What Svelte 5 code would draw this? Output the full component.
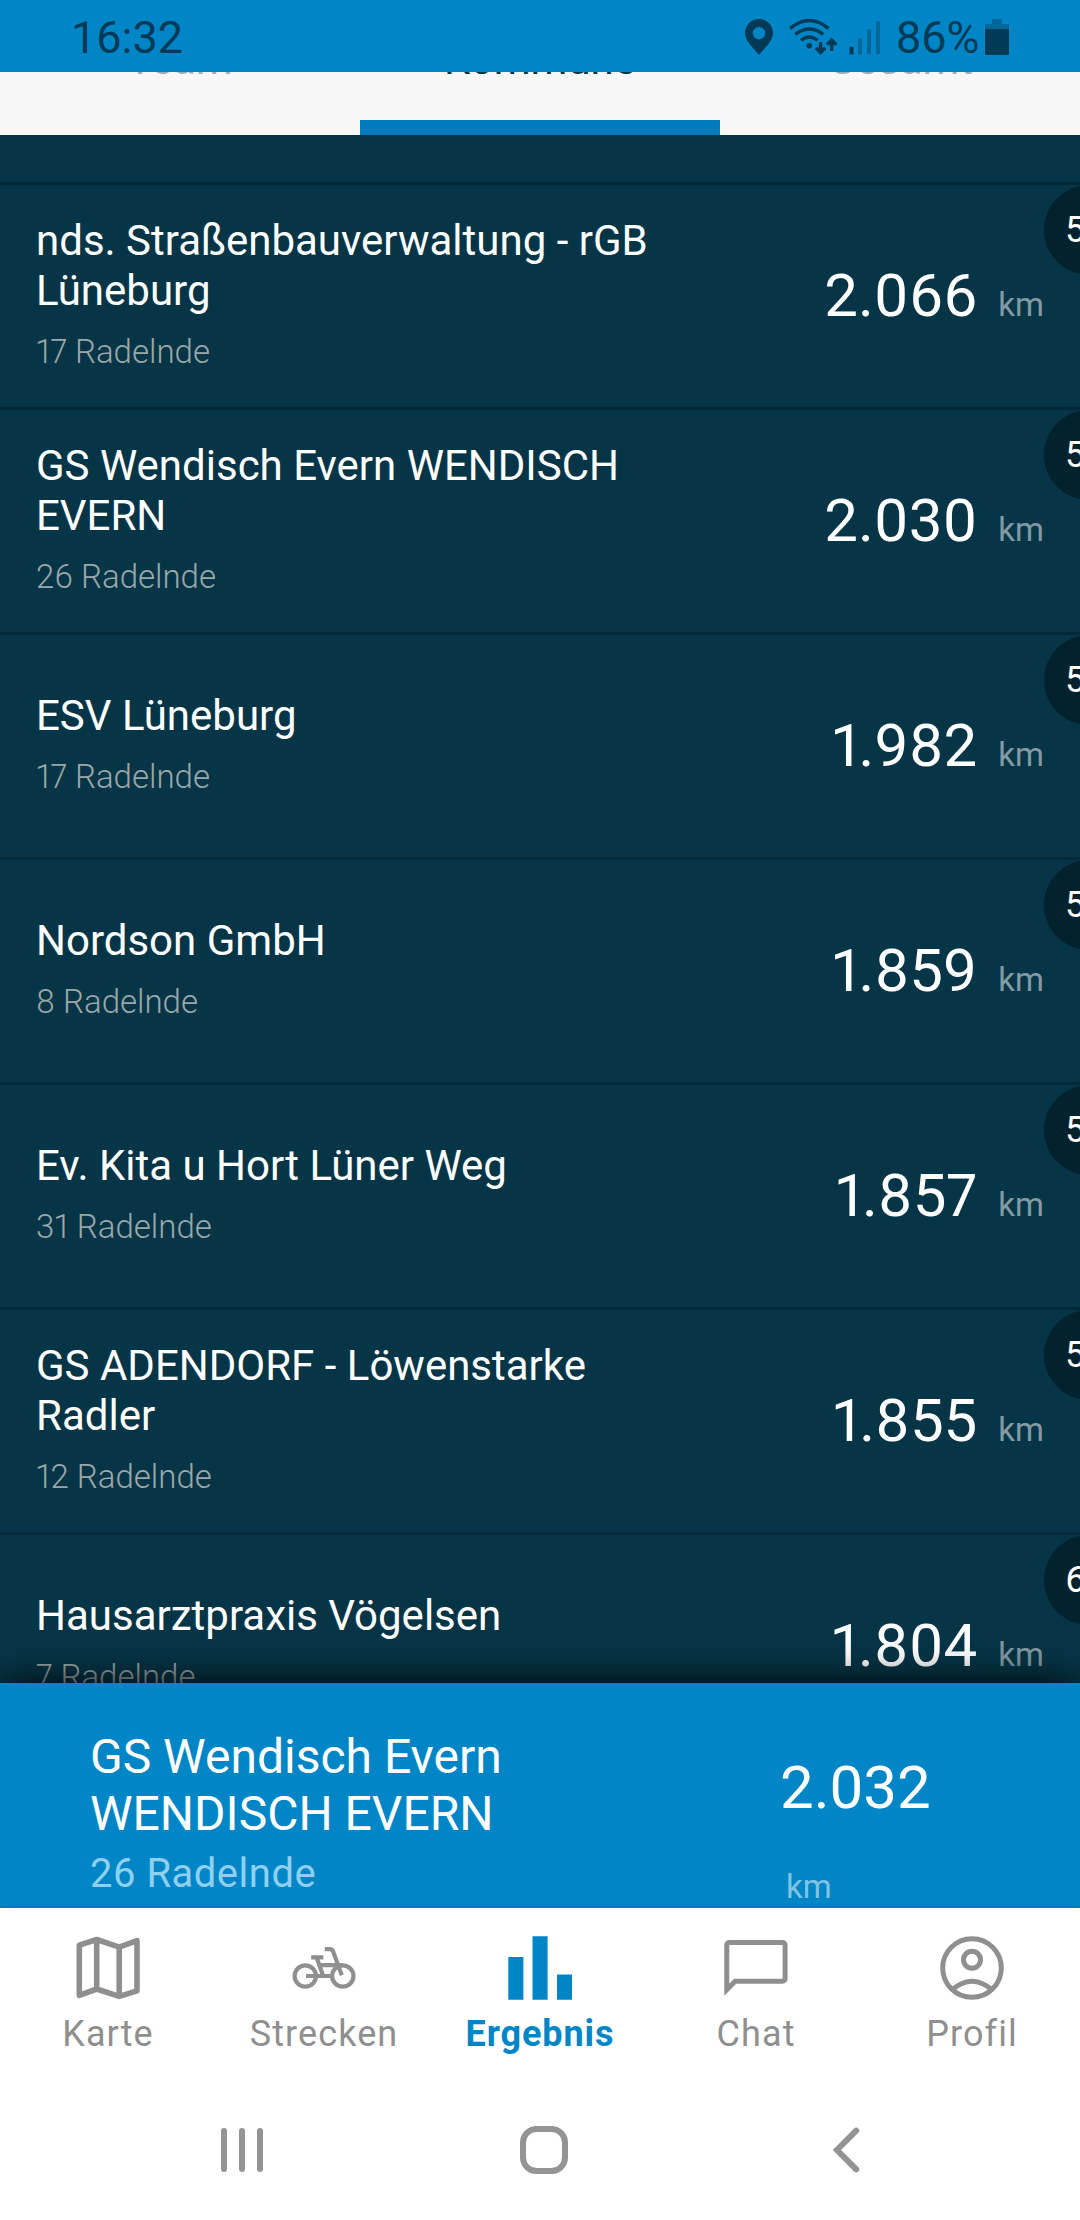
<script lang="ts">
  type Team = { rank: number; name: string; riders: number; km: string }

  const tabs = [`Team`, `Kommune`, `Gesamt`]
  let active_tab = $state(`Kommune`)

  const teams: Team[] = [
    { rank: 54, name: `nds. Straßenbauverwaltung - rGB Lüneburg`, riders: 17, km: `2.066` },
    { rank: 55, name: `GS Wendisch Evern WENDISCH EVERN`, riders: 26, km: `2.030` },
    { rank: 56, name: `ESV Lüneburg`, riders: 17, km: `1.982` },
    { rank: 57, name: `Nordson GmbH`, riders: 8, km: `1.859` },
    { rank: 58, name: `Ev. Kita u Hort Lüner Weg`, riders: 31, km: `1.857` },
    { rank: 59, name: `GS ADENDORF - Löwenstarke Radler`, riders: 12, km: `1.855` },
    { rank: 60, name: `Hausarztpraxis Vögelsen`, riders: 7, km: `1.804` },
  ]
  const own_team = { name: `GS Wendisch Evern WENDISCH EVERN`, riders: 26, km: `2.032` }

  const pages = [`Karte`, `Strecken`, `Ergebnis`, `Chat`, `Profil`]
  let active_page = $state(`Ergebnis`)
</script>

<div class="screen">
  <header class="status">
    <span class="time">16:32</span>
    <div class="indicators">
      <svg class="pin" viewBox="0 0 28 36">
        <path
          fill-rule="evenodd"
          d="M14 0C6.3 0 0 6.2 0 14c0 8 8 14.500 14 22 6-7.500 14-14 14-22C28 6.200 21.700 0 14 0zm0 8a6.200 6.200 0 1 1 0 12.400A6.200 6.200 0 0 1 14 8z"
        />
      </svg>
      <svg class="wifi" viewBox="0 0 48 36">
        <g fill="none" stroke="currentColor" stroke-width="3.400">
          <path d="M1.200 9.400Q20.300-6.200 39.400 9.400M6.300 15.400Q20.300 4.400 34.300 15.400M12 21.300Q20.300 14.600 28.600 21.300" />
          <path d="M31.600 23v10M26.900 28.800l4.700 4.700 4.700-4.700M42.700 32V22M38 25.700l4.700-4.700 4.700 4.700" />
        </g>
        <circle cx="20.300" cy="26.700" r="2.800" />
      </svg>
      <svg class="signal" viewBox="0 0 32 36">
        <rect x="0.500" y="27.500" width="4" height="8" rx="1.500" />
        <g opacity="0.400">
          <rect x="9" y="19" width="4" height="16.500" rx="1.500" />
          <rect x="18" y="10" width="4" height="25.500" rx="1.500" />
          <rect x="27" y="2" width="4" height="33.500" rx="1.500" />
        </g>
      </svg>
      <span class="percent">86%</span>
      <svg class="battery" viewBox="0 0 24 36">
        <path opacity="0.400" d="M7 0h10v5h7v5H0V5h7z" />
        <path d="M0 10h24v24.500a1.500 1.500 0 0 1-1.500 1.500h-21A1.500 1.500 0 0 1 0 34.500z" />
      </svg>
    </div>
  </header>

  <nav class="tabs">
    {#each tabs as tab (tab)}
      <button class:active={tab === active_tab} onclick={() => (active_tab = tab)}>
        <span>{tab}</span>
      </button>
    {/each}
  </nav>

  <main>
    <div class="spacer"></div>
    {#each teams as team (team.rank)}
      <section class="row">
        <div class="info">
          <h2>{team.name}</h2>
          <p>{team.riders} Radelnde</p>
        </div>
        <div class="distance">
          <span class="value">{team.km}</span>
          <span class="unit">km</span>
        </div>
        <span class="rank">{team.rank}.</span>
      </section>
    {/each}
  </main>

  <section class="own">
    <div class="own-info">
      <h2>{own_team.name}</h2>
      <p>{own_team.riders} Radelnde</p>
    </div>
    <div class="own-distance">
      <span class="value">{own_team.km}</span>
      <span class="unit">km</span>
    </div>
  </section>

  <nav class="pages">
    {#each pages as page (page)}
      <button class:active={page === active_page} onclick={() => (active_page = page)}>
        <svg viewBox="0 0 64 64" fill="none" stroke="currentColor" stroke-width="5">
          {#if page === `Karte`}
            <path
              stroke-width="5.600"
              stroke-linejoin="round"
              d="M3.300 9.200 20.700 3.500 43.200 11.200 61 4.600V54.800L43.200 60.400 20.700 53 3.300 59.300ZM20.700 3.500V53M43.200 11.200V60.400"
            />
          {:else if page === `Strecken`}
            <g stroke-width="4.200">
              <circle cx="13.300" cy="40" r="10.700" />
              <circle cx="50.800" cy="40" r="10.700" />
              <path d="M14 40H39M19.200 21.400H31.400M24.800 22 31.200 40M27 29.200H51M32.800 13.200H38.200Q40.300 13.200 41.100 15.400L49.800 39.200" />
            </g>
          {:else if page === `Ergebnis`}
            <path
              fill="currentColor"
              stroke="none"
              d="M.300 21H15.400V63.700H.300ZM24.500 .300H39.600V63.700H24.500ZM49 38.600H64V63.700H49Z"
            />
          {:else if page === `Chat`}
            <path d="M2.800 53.600V9A2.500 2.500 0 0 1 5.300 6.500H58.600A2.500 2.500 0 0 1 61.100 9V42.700A2.500 2.500 0 0 1 58.600 45.200H11.200Z" />
          {:else}
            <circle cx="32" cy="32" r="29.300" />
            <circle cx="32" cy="23.700" r="8.500" />
            <path d="M12.500 53.500Q32 37 51.500 53.500" />
          {/if}
        </svg>
        <span>{page}</span>
      </button>
    {/each}
  </nav>

  <footer class="system">
    <svg viewBox="0 0 48 48">
      <path d="M6 5V43M24 5V43M42 5V43" />
    </svg>
    <svg viewBox="0 0 48 48">
      <rect x="3" y="3" width="42" height="42" rx="13.500" />
    </svg>
    <svg viewBox="0 0 48 48">
      <path d="M34.200 4.600 15 24 34.200 43.400" />
    </svg>
  </footer>
</div>

<style>
  :global(body) {
    margin: 0;
  }
  .screen {
    display: flex;
    flex-direction: column;
    width: 1080px;
    height: 2220px;
    overflow: hidden;
    background: #fff;
    font-family: Roboto, 'Liberation Sans', sans-serif;
  }
  h2,
  p {
    margin: 0;
    font-weight: 400;
  }
  button {
    padding: 0;
    border: 0;
    background: none;
    font: inherit;
  }

  .status {
    display: flex;
    flex: none;
    align-items: center;
    justify-content: space-between;
    box-sizing: border-box;
    height: 72px;
    padding: 2px 71px 0 71px;
    background: #0086c6;
    color: #003a56;
    font-size: 45px;
  }
  .indicators {
    display: flex;
    align-items: center;
  }
  .indicators svg {
    height: 36px;
    fill: currentColor;
  }
  .pin {
    width: 28px;
    margin-right: 16px;
  }
  .wifi {
    width: 48px;
    margin-right: 12px;
  }
  .signal {
    width: 32px;
    margin-right: 15px;
  }
  .percent {
    width: 83px;
    margin-right: 6px;
  }
  .battery {
    width: 24px;
  }

  .tabs {
    display: flex;
    flex: none;
    height: 63px;
    overflow: hidden;
    background: #f7f7f7;
  }
  .tabs button {
    display: flex;
    flex: 1;
    justify-content: center;
    box-sizing: border-box;
    border-bottom: 15px solid transparent;
    color: #9badb8;
    font-size: 42px;
  }
  .tabs button.active {
    border-color: #007bbe;
    color: #073647;
  }
  /* labels are scrolled under the status bar */
  .tabs span {
    margin-top: -36px;
    line-height: 48px;
  }

  main {
    flex: none;
    height: 1548px;
    overflow: hidden;
    background: #063547;
  }
  .spacer {
    height: 47px;
    border-bottom: 3px solid #032936;
  }
  .row {
    position: relative;
    display: flex;
    align-items: center;
    justify-content: space-between;
    box-sizing: border-box;
    height: 225px;
    padding: 0 36px;
    border-bottom: 3px solid #032936;
    color: #fff;
    font-variant-numeric: proportional-nums;
  }
  .info {
    width: 640px;
    padding-bottom: 5px;
  }
  .info h2 {
    font-size: 42px;
    line-height: 50px;
  }
  .info p {
    margin-top: 16px;
    color: #9ba7a8;
    font-size: 33px;
    font-weight: 300;
    line-height: 40px;
  }
  .distance {
    display: flex;
    align-items: baseline;
    gap: 21px;
  }
  .value {
    font-size: 60px;
    line-height: 70px;
  }
  .unit {
    color: #839aa3;
    font-size: 33px;
    line-height: 40px;
  }
  .rank {
    position: absolute;
    top: 0;
    right: -54px;
    box-sizing: border-box;
    width: 90px;
    height: 90px;
    padding-left: 21px;
    border-radius: 50%;
    background: #02222e;
    font-size: 36px;
    line-height: 90px;
  }

  .own {
    position: relative;
    display: flex;
    flex: none;
    justify-content: space-between;
    box-sizing: border-box;
    height: 225px;
    padding: 45px 129px 0 90px;
    background: #0086c6;
    box-shadow: 0 0 36px rgba(0, 0, 0, 0.95);
    color: #fff;
  }
  .own-info {
    width: 440px;
  }
  .own-info h2 {
    font-size: 48px;
    line-height: 57px;
  }
  .own-info p {
    margin-top: 8px;
    color: #8fd0f0;
    font-size: 40px;
    line-height: 48px;
    letter-spacing: 0.5px;
  }
  .own-distance {
    display: flex;
    flex-direction: column;
    width: 171px;
    padding-top: 25px;
  }
  .own-distance .unit {
    margin: 44px 0 0 6px;
    color: #80c3e5;
  }

  .pages {
    position: relative;
    display: flex;
    flex: none;
    height: 172px;
    background: #fff;
    box-shadow: 0 0 6px rgba(0, 0, 0, 0.15);
  }
  .pages button {
    display: flex;
    flex: 1;
    flex-direction: column;
    align-items: center;
    padding-top: 28px;
    color: #8f8f8f;
    font-size: 36px;
    line-height: 42px;
    letter-spacing: 1.1px;
  }
  .pages button.active {
    color: #0086c6;
    font-weight: 700;
    letter-spacing: 0.9px;
  }
  .pages svg {
    width: 64px;
    height: 64px;
    margin-bottom: 13px;
  }

  .system {
    position: relative;
    display: grid;
    grid-template-columns: repeat(3, 302px);
    place-items: center;
    flex: 1;
    padding-left: 91px;
    background: #fff;
  }
  .system svg {
    width: 48px;
    height: 48px;
    fill: none;
    stroke: #949494;
    stroke-width: 6;
    stroke-linecap: round;
  }
</style>
